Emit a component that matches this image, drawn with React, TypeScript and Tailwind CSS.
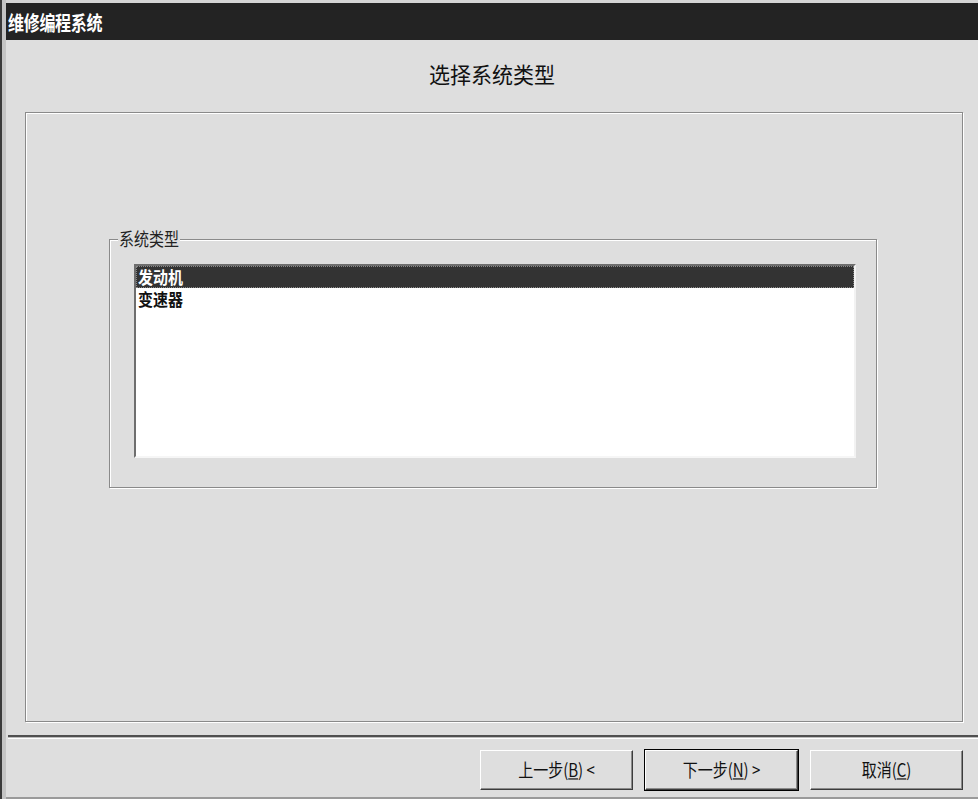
import React from "react";

const font = { fontFamily: '"Noto Sans CJK SC", "Noto Sans", sans-serif' };

function Btn({ children, isDefault }: { children: React.ReactNode; isDefault?: boolean }) {
  return (
    <div
      className={
        "w-[153px] h-[40px] flex items-center justify-center text-[15px] text-[#111] bg-[#dedede] border border-t-white border-l-white border-r-[#3c3c3c] border-b-[#3c3c3c] shadow-[inset_-1px_-1px_0_#8a8a8a]" +
        (isDefault ? " outline outline-1 outline-black" : "")
      }
    >
      <span className="inline-block scale-y-[1.2]">{children}</span>
    </div>
  );
}

export default function App() {
  return (
    <div className="w-[978px] h-[799px] bg-[#dedede] flex overflow-hidden" style={font}>
      <div className="w-[2px] h-full bg-[#3a3a3a]" />
      <div className="w-[4px] h-full bg-[#c4c4c4]" />
      <div className="flex-1 flex flex-col">
        <div className="h-[3px] bg-[#d4d4d4]" />
        <div className="h-[37px] bg-[#232323] flex items-center pl-[2px] text-white font-bold text-[16px] tracking-[-0.3px]">
          <span className="inline-block scale-y-[1.25]">维修编程系统</span>
        </div>
        <div className="h-[72px] flex items-center justify-center text-[21px] text-[#111] pb-[2px]">
          <span className="inline-block scale-y-[1.05]">选择系统类型</span>
        </div>
        <div className="ml-[19px] w-[938px] h-[610px] border border-[#8a8a8a] shadow-[inset_1px_1px_0_white,1px_1px_0_white] pt-[126px] pl-[83px]">
          <div className="relative w-[768px] h-[249px] border border-[#8a8a8a] shadow-[inset_1px_1px_0_white,1px_1px_0_white] pt-[24px] pl-[24px]">
            <div className="absolute left-[8px] top-[-11px] bg-[#dedede] px-[1px] text-[15px] leading-[20px] text-[#222]">
              <span className="inline-block scale-y-[1.2]">系统类型</span>
            </div>
            <div className="w-[722px] h-[194px] bg-white border-2 border-t-[#6e6e6e] border-l-[#6e6e6e] border-r-[#f2f2f2] border-b-[#f6f6f6] flex flex-col">
              <div className="h-[22px] bg-[#333333] text-white text-[15px] font-bold leading-[20px] pl-[1px] border border-dotted border-[#888]">
                <span className="inline-block scale-y-[1.1]">发动机</span>
              </div>
              <div className="h-[22px] text-[#111] text-[15px] font-bold leading-[22px] pl-[2px]">
                <span className="inline-block scale-y-[1.1]">变速器</span>
              </div>
            </div>
          </div>
        </div>
        <div className="h-[13px]" />
        <div className="ml-[2px] h-[2px] bg-[#505050]" />
        <div className="ml-[2px] h-[1px] bg-[#bdbdbd]" />
        <div className="ml-[2px] h-[1px] bg-white" />
        <div className="h-[11px]" />
        <div className="flex gap-[12px] pl-[474px]">
          <Btn>
            上一步(<span className="underline">B</span>) &lt;
          </Btn>
          <Btn isDefault>
            下一步(<span className="underline">N</span>) &gt;
          </Btn>
          <Btn>
            取消(<span className="underline">C</span>)
          </Btn>
        </div>
        <div className="flex-1" />
        <div className="h-[2px] bg-[#9a9a9a]" />
      </div>
    </div>
  );
}
